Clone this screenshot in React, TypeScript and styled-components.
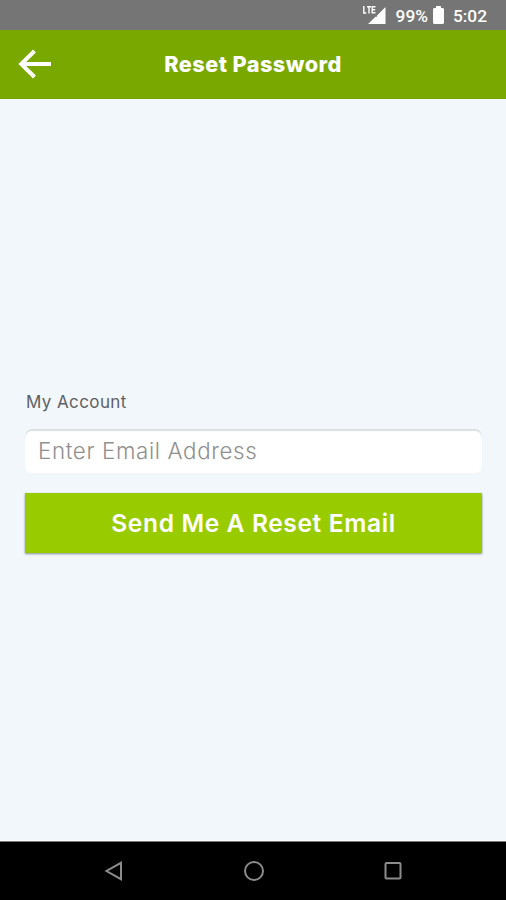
import React from "react";
import styled, { createGlobalStyle } from "styled-components";

const GlobalStyle = createGlobalStyle`
  * { box-sizing: border-box; }
  body { margin: 0; background: #f2f7fb; }
`;

const Screen = styled.div`
  width: 100%;
  height: 900px;
  display: flex;
  flex-direction: column;
  background: #f2f7fb;
  font-family: Inter, "Open Sans", sans-serif;
  overflow: hidden;
`;

const StatusBar = styled.div`
  height: 30px;
  flex: none;
  display: flex;
  align-items: center;
  justify-content: flex-end;
  padding: 2px 19px 0 0;
  background: #757575;
  color: #fff;
  font: 500 17.3px/28px Roboto, sans-serif;
`;

const Signal = styled.svg`
  width: 25px;
  height: 22px;
  margin: -3px 9px 0 0;
`;

const Battery = styled.svg`
  width: 11px;
  height: 20px;
  margin: -2px 9px 0 5px;
`;

const Header = styled.header`
  height: 69px;
  flex: none;
  display: grid;
  grid-template-columns: 72px 1fr 72px;
  align-items: center;
  background: #79a800;
  border-bottom: 1px solid #74a000;
`;

const BackButton = styled.button`
  display: flex;
  padding: 0 0 0 18px;
  border: 0;
  background: none;
`;

const Title = styled.h1`
  margin: 0;
  text-align: center;
  white-space: nowrap;
  color: #fff;
  font-size: 21.7px;
  line-height: 30px;
  font-weight: 800;
  letter-spacing: 0.45px;
`;

const Form = styled.form`
  flex: 1;
  display: flex;
  flex-direction: column;
  padding: 290px 24px 0 25px;
`;

const Label = styled.label`
  height: 26px;
  padding-left: 1px;
  margin-bottom: 14px;
  color: #5e6164;
  font-size: 17px;
  line-height: 26px;
  letter-spacing: 0.4px;
`;

const EmailInput = styled.input`
  width: 100%;
  height: 44px;
  margin: 0 0 20px;
  padding: 0 13px 1px;
  border: 0;
  border-radius: 7px;
  outline: 0;
  background: #fff;
  box-shadow: inset 0 2px 1px #dce0e2;
  font: 300 22.3px Inter, "Open Sans", sans-serif;
  letter-spacing: 0.65px;
  &::placeholder { color: #8f8f8f; opacity: 1; }
`;

const SubmitButton = styled.button`
  width: 100%;
  height: 60px;
  padding: 0;
  border: 0;
  background: #99cc00;
  color: #fff;
  box-shadow: 0 1px 2px rgba(70, 80, 90, 0.65);
  font: 600 24.6px/60px Inter, "Open Sans", sans-serif;
  letter-spacing: 0.6px;
`;

const NavigationBar = styled.nav`
  height: 59px;
  flex: none;
  display: flex;
  justify-content: space-between;
  align-items: center;
  padding: 0 102px 0 103px;
  background: #000;
  border-top: 1px solid #777;
  box-shadow: 0 -1px 1px #fff;
`;

const NavIcon = styled.svg`
  width: 22px;
  height: 22px;
  fill: none;
  stroke: #8b8b8b;
  stroke-width: 2;
`;

export default function App() {
  return (
    <>
      <GlobalStyle />
      <Screen>
        <StatusBar>
          <Signal viewBox="0 0 25 22" aria-label="LTE signal">
            <path d="M23.5 3v17H6l7.5-7.2H15v-1.4z" fill="#fff" />
            <path d="M1.8 2v7h2.5M5 2.7h4M7 2.7v6.8M13.5 2.7h-3.3v6h3.3M10.2 5.7h3" fill="none" stroke="#fff" strokeWidth="1.4" />
          </Signal>
          <span>99%</span>
          <Battery viewBox="0 0 11 20" aria-label="Battery">
            <path d="M3 1h5v2h2l1 1v14l-1 1H1l-1-1V4l1-1h2z" fill="#fff" />
          </Battery>
          <span>5:02</span>
        </StatusBar>
        <Header>
          <BackButton aria-label="Back">
            <svg width="34" height="32" viewBox="0 0 34 32" fill="none" stroke="#fff" strokeWidth="4">
              <path d="M16.5 3 3.2 16l13.3 13M3.2 16H33" />
            </svg>
          </BackButton>
          <Title>Reset Password</Title>
        </Header>
        <Form onSubmit={(event) => event.preventDefault()}>
          <Label htmlFor="email">My Account</Label>
          <EmailInput id="email" type="email" placeholder="Enter Email Address" />
          <SubmitButton type="submit">Send Me A Reset Email</SubmitButton>
        </Form>
        <NavigationBar>
          <NavIcon viewBox="0 0 22 22"><path d="M18 2.8v16.4L3.5 11z" /></NavIcon>
          <NavIcon viewBox="0 0 22 22"><circle cx="11" cy="11" r="9" /></NavIcon>
          <NavIcon viewBox="0 0 22 22"><rect x="3.5" y="3" width="15" height="15.5" rx="1" /></NavIcon>
        </NavigationBar>
      </Screen>
    </>
  );
}
